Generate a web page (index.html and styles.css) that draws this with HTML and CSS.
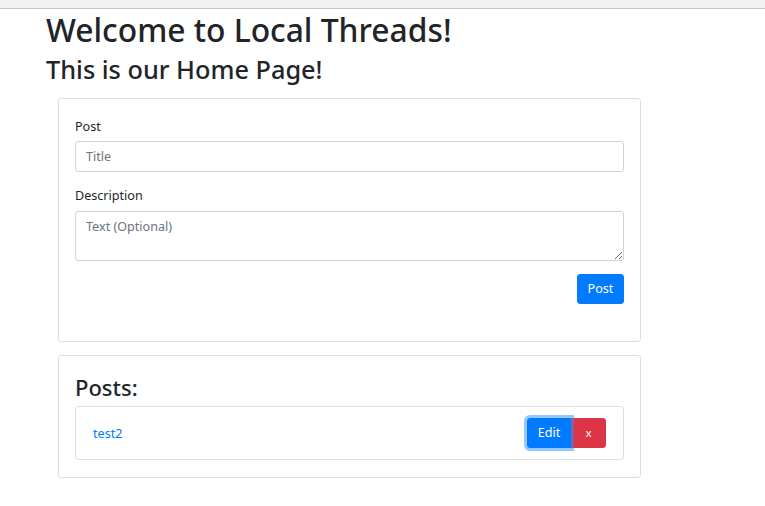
FILE: index.html
```html
<!DOCTYPE html>
<html lang="en">
<head>
<meta charset="utf-8">
<title>Local Threads</title>
<link rel="stylesheet" href="styles.css">
</head>
<body>
<div class="chrome"></div>
<main class="page">
  <h1 class="title">Welcome to Local Threads!</h1>
  <h2 class="subtitle">This is our Home Page!</h2>

  <section class="card">
    <form class="post-form">
      <div class="group">
        <label class="label" for="title">Post</label>
        <input class="control" id="title" type="text" placeholder="Title">
      </div>
      <div class="group">
        <label class="label" for="desc">Description</label>
        <textarea class="control area" id="desc" placeholder="Text (Optional)"></textarea>
      </div>
      <div class="actions">
        <button type="button" class="btn btn-primary btn-post">Post</button>
      </div>
    </form>
  </section>

  <section class="card posts">
    <h3 class="posts-title">Posts:</h3>
    <div class="post-item">
      <a class="post-link" href="#">test2</a>
      <div class="btn-group">
        <button type="button" class="btn btn-primary btn-edit focused">Edit</button>
        <button type="button" class="btn btn-danger btn-del">x</button>
      </div>
    </div>
  </section>
</main>
</body>
</html>
```
FILE: styles.css
```css
* { box-sizing: border-box; }
html, body { margin: 0; padding: 0; background: #fff; }
body {
  font-family: "Noto Sans", "Open Sans", sans-serif;
  font-size: 12.6px;
  line-height: 1.5;
  color: #212529;
}
.chrome {
  height: 9px;
  background: #f1f1f1;
  border-bottom: 1px solid #c6c6c6;
}
.page {
  padding-left: 46px;
  width: 641px;
}
.title {
  margin: 0;
  font-size: 31.8px;
  font-weight: 500;
  line-height: 41px;
}
.subtitle {
  margin: 3px 0 13px;
  font-size: 25.3px;
  font-weight: 500;
  line-height: 32px;
}
.card {
  margin-left: 12px;
  border: 1px solid #dfdfdf;
  border-radius: 3px;
  padding: 17px 16px;
}
.card + .card { margin-top: 13px; }
.group { margin-bottom: 13px; display: flex; flex-direction: column; }
.label { line-height: 20px; padding-top: 1px; margin-bottom: 4px; }
.group + .group .label { margin-bottom: 5px; }
.control {
  font: inherit;
  color: #495057;
  height: 31px;
  padding: 4px 10px;
  border: 1px solid #ced4da;
  border-radius: 3px;
  background: #fff;
}
.control::placeholder { color: #6c757d; }
.area { height: 50px; padding-top: 6px; resize: vertical; }
.actions { display: flex; justify-content: flex-end; margin-bottom: 20px; }
.btn {
  font: inherit;
  height: 30px;
  padding: 0 10px;
  border: 1px solid transparent;
  border-radius: 3px;
  color: #fff;
  cursor: pointer;
}
.btn-post { width: 47px; padding: 0; }
.btn-primary { background: #007bff; border-color: #007bff; }
.btn-danger { background: #dc3545; border-color: #dc3545; }
.posts-title {
  margin: 0 0 4px;
  font-size: 22px;
  font-weight: 500;
  line-height: 29px;
}
.post-item {
  display: flex;
  align-items: center;
  justify-content: space-between;
  border: 1px solid #dfdfdf;
  border-radius: 3px;
  padding: 11px 17px;
}
.post-link { color: #007bff; text-decoration: none; padding-top: 2px; }
.btn-group { display: flex; }
.btn-edit { width: 44px; padding: 0; border-radius: 3px 0 0 3px; }
.btn-del { width: 35px; padding: 0; border-radius: 0 3px 3px 0; font-size: 11.5px; }
.focused { box-shadow: 0 0 0 3px rgba(38, 143, 255, 0.5); position: relative; z-index: 1; }
```
